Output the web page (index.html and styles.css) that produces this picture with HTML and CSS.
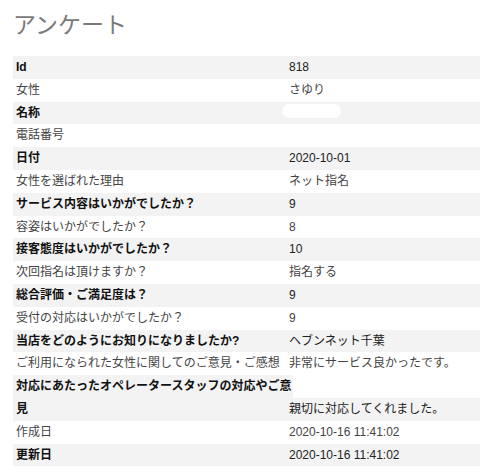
FILE: index.html
```html
<!DOCTYPE html>
<html lang="ja">
<head>
<meta charset="utf-8">
<title>アンケート</title>
<link rel="stylesheet" href="styles.css">
</head>
<body>
<div class="page">
  <h1 class="title">アンケート</h1>
  <div class="table">
    <div class="row odd"><div class="label">Id</div><div class="value">818</div></div>
    <div class="row"><div class="label">女性</div><div class="value">さゆり</div></div>
    <div class="row odd"><div class="label">名称</div><div class="value"><span class="redact"></span></div></div>
    <div class="row"><div class="label">電話番号</div><div class="value"></div></div>
    <div class="row odd"><div class="label">日付</div><div class="value">2020-10-01</div></div>
    <div class="row"><div class="label">女性を選ばれた理由</div><div class="value">ネット指名</div></div>
    <div class="row odd"><div class="label">サービス内容はいかがでしたか？</div><div class="value">9</div></div>
    <div class="row"><div class="label">容姿はいかがでしたか？</div><div class="value">8</div></div>
    <div class="row odd"><div class="label">接客態度はいかがでしたか？</div><div class="value">10</div></div>
    <div class="row"><div class="label">次回指名は頂けますか？</div><div class="value">指名する</div></div>
    <div class="row odd"><div class="label">総合評価・ご満足度は？</div><div class="value">9</div></div>
    <div class="row"><div class="label">受付の対応はいかがでしたか？</div><div class="value">9</div></div>
    <div class="row odd"><div class="label">当店をどのようにお知りになりましたか?</div><div class="value">ヘブンネット千葉</div></div>
    <div class="row"><div class="label">ご利用になられた女性に関してのご意見・ご感想</div><div class="value">非常にサービス良かったです。</div></div>
    <div class="row odd"><div class="label">対応にあたったオペレータースタッフの対応やご意見</div><div class="value">親切に対応してくれました。</div></div>
    <div class="row"><div class="label">作成日</div><div class="value">2020-10-16 11:41:02</div></div>
    <div class="row odd"><div class="label">更新日</div><div class="value">2020-10-16 11:41:02</div></div>
  </div>
</div>
</body>
</html>
```

FILE: styles.css
```css
html, body {
  margin: 0;
  padding: 0;
  background: #ffffff;
}
body {
  font-family: "Liberation Sans", "Noto Sans CJK JP", sans-serif;
  font-size: 12px;
  color: #444444;
}
.page {
  padding-left: 13px;
}
.title {
  margin: 11px 0 17px 0;
  font-size: 23px;
  line-height: 28px;
  font-weight: normal;
  color: #7a7a7a;
}
.row {
  display: grid;
  grid-template-columns: 280px 1fr;
  line-height: 22.8px;
}
.label {
  padding-left: 3px;
}
.value {
  margin-left: -4px;
  align-self: end;
  min-height: 22.8px;
}
.row.odd .label,
.row.odd .value {
  background: #f3f3f3;
}
.row.odd .label {
  font-weight: bold;
  color: #111111;
}
.row.odd .value {
  color: #222222;
}
.redact {
  display: inline-block;
  vertical-align: top;
  width: 59px;
  height: 14px;
  margin: 2px 0 0 -7px;
  border-radius: 7px;
  background: #ffffff;
}
```
